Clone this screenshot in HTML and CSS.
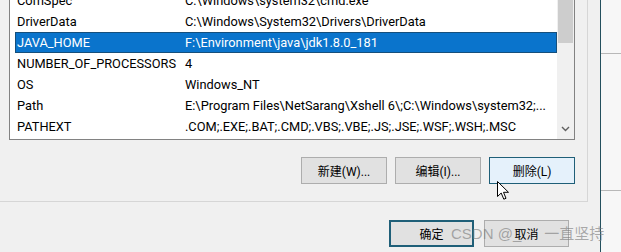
FILE: index.html
```html
<!DOCTYPE html>
<html lang="zh-CN">
<head>
    <meta charset="UTF-8"/>
    <title>环境变量</title>
    <link rel="stylesheet" href="styles.css">
</head>
<body>
<div class="screen">
    <div class="dialog">
        <div class="group">
            <div class="listbox">
                <div class="rows">
                    <div class="row"><span>ComSpec</span><span>C:\Windows\system32\cmd.exe</span></div>
                    <div class="row"><span>DriverData</span><span>C:\Windows\System32\Drivers\DriverData</span></div>
                    <div class="row selected"><span>JAVA_HOME</span><span>F:\Environment\java\jdk1.8.0_181</span></div>
                    <div class="row"><span>NUMBER_OF_PROCESSORS</span><span>4</span></div>
                    <div class="row"><span>OS</span><span>Windows_NT</span></div>
                    <div class="row"><span>Path</span><span>E:\Program Files\NetSarang\Xshell 6\;C:\Windows\system32;...</span></div>
                    <div class="row"><span>PATHEXT</span><span>.COM;.EXE;.BAT;.CMD;.VBS;.VBE;.JS;.JSE;.WSF;.WSH;.MSC</span></div>
                </div>
                <div class="scrollbar">
                    <div class="thumb"></div>
                    <svg class="down" width="9" height="6" viewBox="0 0 9 6">
                        <polyline points="1,1 4.5,4.5 8,1" fill="none" stroke="#606060" stroke-width="1.4"/>
                    </svg>
                </div>
            </div>
            <div class="actions">
                <a href="javascript:;" class="btn">新建(W)...</a>
                <a href="javascript:;" class="btn">编辑(I)...</a>
                <a href="javascript:;" class="btn hover">删除(L)</a>
            </div>
        </div>
        <div class="footer">
            <a href="javascript:;" class="btn default">确定</a>
            <a href="javascript:;" class="btn">取消</a>
        </div>
    </div>
    <div class="side">
        <div class="rule top"></div>
        <div class="rule bottom"></div>
    </div>
</div>

<!--水印-->
<div class="watermark"><span>CSDN @_</span><span class="gap"></span><span>一直坚持</span></div>

<!--鼠标指针-->
<svg class="cursor" width="13" height="20" viewBox="0 0 13 20">
    <path d="M0.5,0.5 L0.5,15.5 L4.2,12 L6.8,18.2 L9,17.3 L6.5,11.3 L11.5,11.3 Z" fill="#fff" stroke="#000" stroke-width="1" stroke-linejoin="round"/>
</svg>
</body>
</html>
```

FILE: styles.css
```css
* {
    margin: 0;
    padding: 0;
    box-sizing: border-box;
}

body {
    width: 621px;
    height: 252px;
    overflow: hidden;
    background: #f0f0f0;
    font-family: Roboto, "Noto Sans CJK SC", sans-serif;
    color: #000;
    position: relative;
}

.screen {
    display: flex;
    height: 252px;
}

.dialog {
    width: 601px;
    border-right: 1px solid #24505e;
    background: #f0f0f0;
}

.group {
    width: 588px;
    height: 202px;
    border-right: 1px solid #d6d6d6;
    border-bottom: 1px solid #d6d6d6;
    padding-right: 12px;
}

.listbox {
    display: flex;
    width: 566px;
    height: 140px;
    margin-left: 9px;
    border: 1px solid #828282;
    border-top: 0;
    background: #fff;
}

.rows {
    flex: 1;
    overflow: hidden;
    padding: 0 0 0 5px;
    font-size: 12.8px;
}

.row {
    display: grid;
    grid-template-columns: 168px 1fr;
    height: 21px;
    line-height: 21px;
    white-space: nowrap;
}

.row:first-child {
    margin-top: -10px;
}

.row span {
    padding-left: 2px;
    overflow: hidden;
}

.row.selected {
    background: #0a74cc;
    color: #fff;
    box-shadow: inset 0 0 0 1px #154f7c;
}

.scrollbar {
    width: 17px;
    background: #f0f0f0;
    display: flex;
    flex-direction: column;
    justify-content: space-between;
    align-items: center;
    padding: 0 1px 7px;
}

.scrollbar .thumb {
    width: 15px;
    height: 43px;
    background: #cdcdcd;
}

.actions {
    display: flex;
    justify-content: flex-end;
    gap: 8px;
    margin-top: 17px;
}

.btn {
    display: flex;
    align-items: center;
    justify-content: center;
    width: 86px;
    height: 27px;
    background: #e1e1e1;
    border: 1px solid #adadad;
    font-size: 12px;
    color: #000;
    text-decoration: none;
}

.btn.hover {
    background: #e5f1fb;
    border-color: #1f5f78;
}

.footer {
    display: flex;
    justify-content: flex-end;
    gap: 10px;
    margin-top: 18px;
    padding-right: 31px;
}

.footer .btn {
    width: 85px;
}

.btn.default {
    border: 2px solid #1f5f78;
}

.side {
    flex: 1;
    background: #f7f7f7;
}

.side .rule {
    border-top: 1px solid #b8b8b8;
}

.side .top {
    margin-top: 53px;
}

.side .bottom {
    margin-top: 136px;
}

.watermark {
    position: absolute;
    left: 451px;
    top: 225px;
    display: flex;
    font-size: 15px;
    line-height: 18px;
    color: rgba(120, 120, 120, 0.6);
    font-family: "Liberation Sans", "Noto Sans CJK SC", sans-serif;
    white-space: nowrap;
}

.watermark .gap {
    width: 23px;
}

.cursor {
    position: absolute;
    left: 497px;
    top: 181px;
}
```
